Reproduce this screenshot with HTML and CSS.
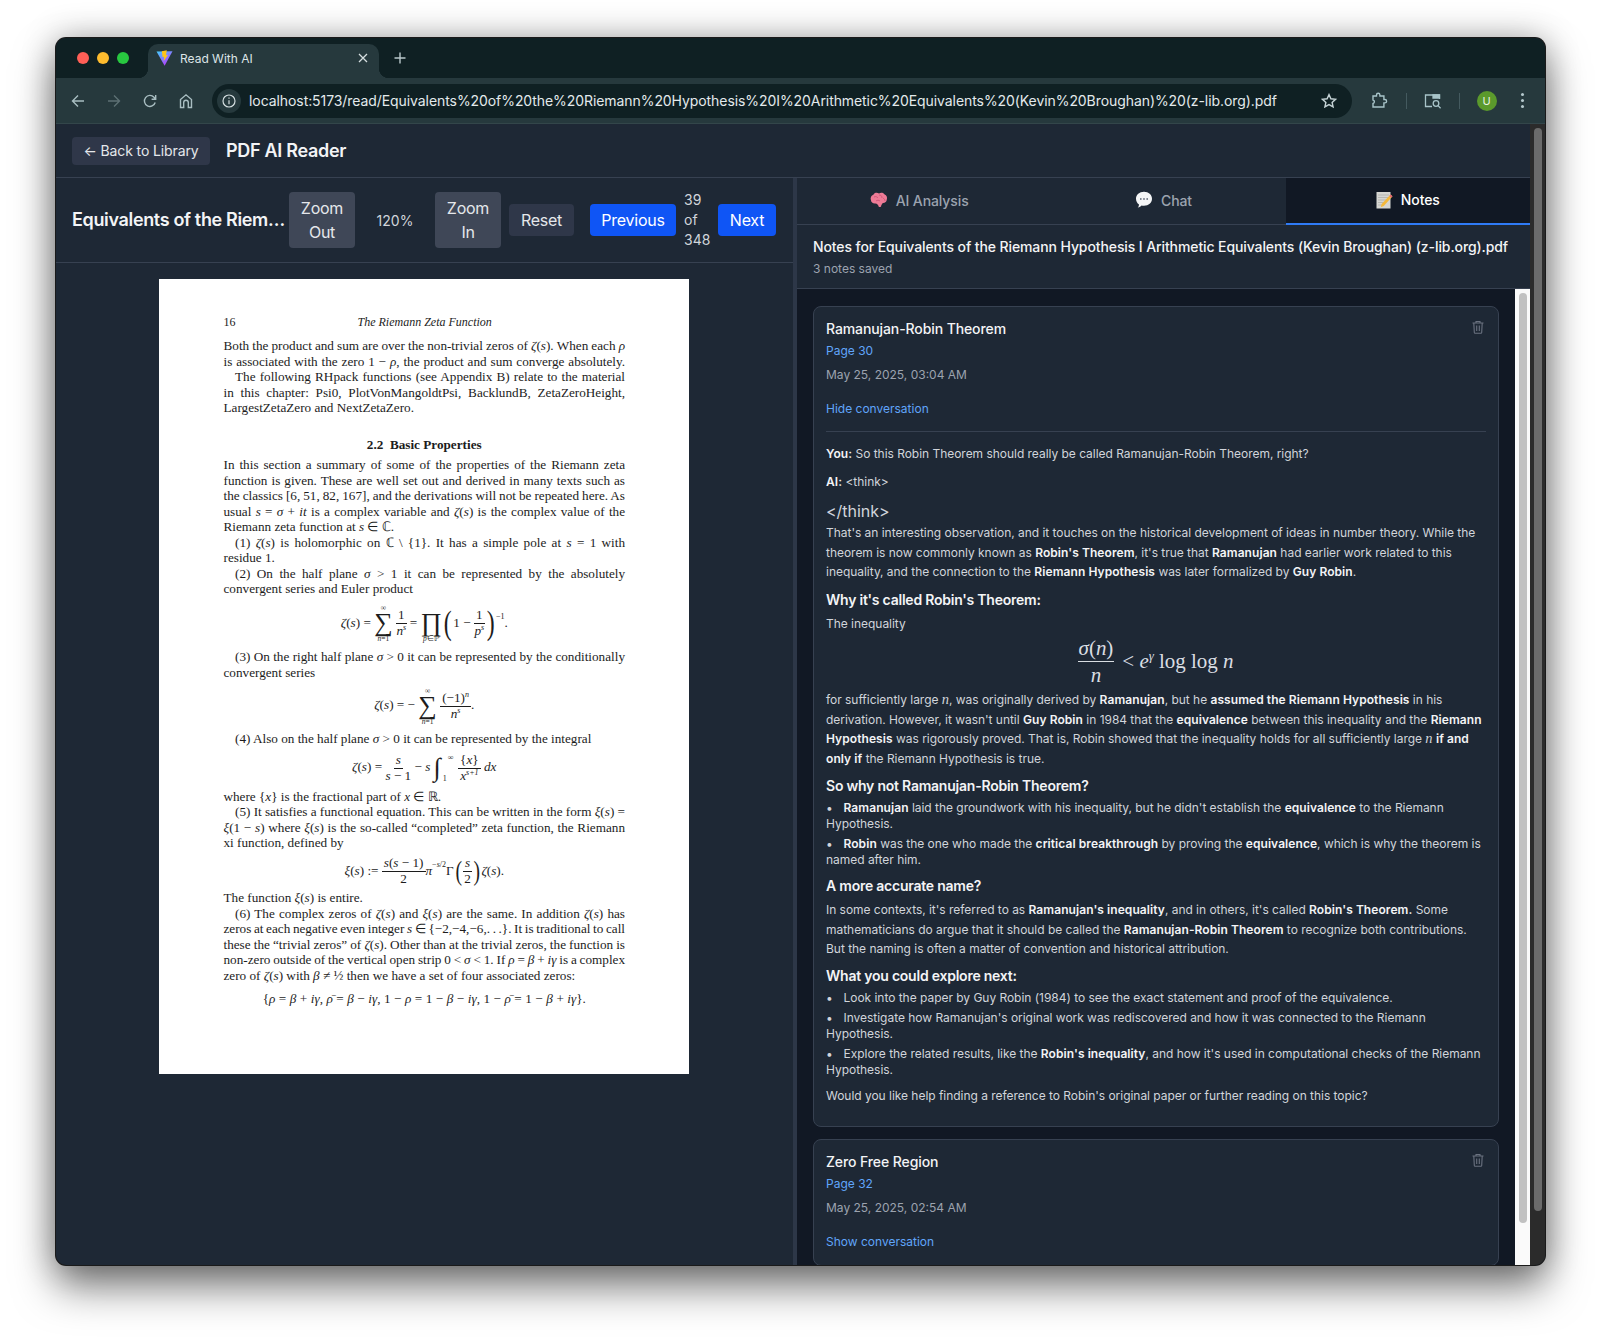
FILE: index.html
```html
<!DOCTYPE html>
<html lang="en">
<head>
  <meta charset="UTF-8">
  <title>Read With AI</title>
  <link rel="stylesheet" href="styles.css">
</head>
<body>

<div class="window">
  <div class="tabstrip">
    <div class="lights">
      <span class="light red"></span>
      <span class="light yellow"></span>
      <span class="light green"></span>
    </div>
    <div class="tab">
      <svg class="favicon" width="17" height="16" viewBox="0 0 17 16">
        <defs>
          <linearGradient id="vite" x1="0" y1="0" x2="0.7" y2="1">
            <stop offset="0" stop-color="#41d1ff"/>
            <stop offset="1" stop-color="#bd34fe"/>
          </linearGradient>
        </defs>
        <polygon points="0.5,1.5 16.5,1.2 8.6,15.8" fill="url(#vite)"/>
        <polygon points="10.8,0.2 5.8,1.2 6.6,7.2 8.2,6.8 7.6,11 12,5 10,5.3" fill="#ffc517"/>
      </svg>
      <span class="tab-title">Read With AI</span>
      <svg class="tab-close" width="10" height="10" viewBox="0 0 10 10"><path d="M1 1l8 8M9 1l-8 8" stroke="#d5dee0" stroke-width="1.3"/></svg>
    </div>
    <svg class="new-tab" width="12" height="12" viewBox="0 0 12 12"><path d="M6 0.5v11M0.5 6h11" stroke="#b9c8cb" stroke-width="1.4"/></svg>
  </div>

  <div class="toolbar">
    <span class="tool"><svg width="16" height="16" viewBox="0 0 16 16" fill="none" stroke="#a8bdc1" stroke-width="1.4"><path d="M14 8H2.5M8 2.5L2.5 8 8 13.5"/></svg></span>
    <span class="tool"><svg width="16" height="16" viewBox="0 0 16 16" fill="none" stroke="#5d7074" stroke-width="1.4"><path d="M2 8h11.5M8 2.5L13.5 8 8 13.5"/></svg></span>
    <span class="tool"><svg width="16" height="16" viewBox="0 0 16 16" fill="none" stroke="#a8bdc1" stroke-width="1.4"><path d="M13.2 9.5A5.5 5.5 0 1 1 12 4.2L13.5 6M13.7 2v4.2H9.6"/></svg></span>
    <span class="tool"><svg width="16" height="16" viewBox="0 0 16 16" fill="none" stroke="#a8bdc1" stroke-width="1.4"><path d="M2.5 14.5V6.5L8 1.8l5.5 4.7v8h-3.2V9.5a2.3 2.3 0 0 0-4.6 0v5z"/></svg></span>

    <div class="address">
      <span class="site-info"><svg width="14" height="14" viewBox="0 0 14 14" fill="none" stroke="#d5dee0" stroke-width="1.2"><circle cx="7" cy="7" r="6"/><path d="M7 6.2v4M7 3.6v1.2"/></svg></span>
      <span class="url">localhost:5173/read/Equivalents%20of%20the%20Riemann%20Hypothesis%20I%20Arithmetic%20Equivalents%20(Kevin%20Broughan)%20(z-lib.org).pdf</span>
      <svg class="star" width="16" height="16" viewBox="0 0 16 16" fill="none" stroke="#c4d2d5" stroke-width="1.4"><path d="M8 1.6l1.9 4.2 4.6.5-3.4 3.1 1 4.5L8 11.6l-4.1 2.3 1-4.5L1.500 6.300l4.600-.5z"/></svg>
    </div>

    <span class="tool tool-ext"><svg width="17" height="17" viewBox="0 0 17 17" fill="none" stroke="#a8c4c9" stroke-width="1.4"><path d="M2 4h3.500V3a1.700 1.700 0 0 1 3.400 0v1h4v3.500h1a1.700 1.700 0 0 1 0 3.400h-1V15H2v-3.500a1.800 1.800 0 0 0 0-3.500z"/></svg></span>
    <span class="sep"></span>
    <span class="tool"><svg width="18" height="16" viewBox="0 0 18 16" fill="none" stroke="#a8c4c9" stroke-width="1.3"><path d="M8 13.500H1.500V2h14v4"/><path d="M9 2h6.500v3H9z" fill="#a8c4c9"/><circle cx="12" cy="10.500" r="2.800"/><path d="M14 12.600l2.600 2.600"/></svg></span>
    <span class="sep"></span>
    <span class="tool"><span class="avatar">U</span></span>
    <span class="tool"><span class="kebab"><i></i><i></i><i></i></span></span>
  </div>

  <div class="viewport">
    <div class="app">
      <header class="app-header">
        <button class="back-btn">← Back to Library</button>
        <h1>PDF AI Reader</h1>
      </header>

      <div class="panels">
        <section class="reader">
          <div class="reader-bar">
            <div class="doc-title">Equivalents of the Riemann Hypothesis I Arithmetic Equivalents</div>
            <button class="btn btn-zoom">Zoom Out</button>
            <span class="zoom-level">120%</span>
            <button class="btn btn-zoom">Zoom In</button>
            <button class="btn btn-reset">Reset</button>
            <button class="btn btn-blue btn-prev">Previous</button>
            <span class="page-count">39 of 348</span>
            <button class="btn btn-blue btn-next">Next</button>
          </div>

          <div class="pdf-area">
            <div class="pdf-page">
              <div class="running"><span>16</span><i>The Riemann Zeta Function</i></div>
              <div class="ln">Both the product and sum are over the non-trivial zeros of <i>ζ</i>(<i>s</i>). When each <i>ρ</i></div>
              <div class="ln">is associated with the zero 1 − <i>ρ</i>, the product and sum converge absolutely.</div>
              <div class="ln ind">The following RHpack functions (see Appendix B) relate to the material</div>
              <div class="ln">in this chapter: Psi0, PlotVonMangoldtPsi, BacklundB, ZetaZeroHeight,</div>
              <div class="ln end">LargestZetaZero and NextZetaZero.</div>

              <h2 class="pdf-heading">2.2&nbsp;&nbsp;Basic Properties</h2>

              <div class="ln">In this section a summary of some of the properties of the Riemann zeta</div>
              <div class="ln">function is given. These are well set out and derived in many texts such as</div>
              <div class="ln">the classics [6, 51, 82, 167], and the derivations will not be repeated here. As</div>
              <div class="ln">usual <i>s</i> = <i>σ</i> + <i>it</i> is a complex variable and <i>ζ</i>(<i>s</i>) is the complex value of the</div>
              <div class="ln end">Riemann zeta function at <i>s</i> ∈ ℂ.</div>
              <div class="ln ind">(1) <i>ζ</i>(<i>s</i>) is holomorphic on ℂ \ {1}. It has a simple pole at <i>s</i> = 1 with</div>
              <div class="ln end">residue 1.</div>
              <div class="ln ind">(2) On the half plane <i>σ</i> &gt; 1 it can be represented by the absolutely</div>
              <div class="ln end">convergent series and Euler product</div>

              <div class="eq eq-euler">
                <i>ζ</i>(<i>s</i>) =
                <span class="bigop"><small>∞</small><b>∑</b><small><i>n</i>=1</small></span>
                <span class="frac"><span>1</span><span><i>n<sup>s</sup></i></span></span>
                =
                <span class="bigop"><small>&nbsp;</small><b>∏</b><small><i>p</i>∈ℙ</small></span><span class="paren">(</span>1 −
                <span class="frac"><span>1</span><span><i>p<sup>s</sup></i></span></span><span class="paren">)</span><sup class="pow">−1</sup>.
              </div>

              <div class="ln ind">(3) On the right half plane <i>σ</i> &gt; 0 it can be represented by the conditionally</div>
              <div class="ln end">convergent series</div>

              <div class="eq eq-series">
                <i>ζ</i>(<i>s</i>) = −
                <span class="bigop"><small>∞</small><b>∑</b><small><i>n</i>=1</small></span>
                <span class="frac"><span>(−1)<sup><i>n</i></sup></span><span><i>n<sup>s</sup></i></span></span>.
              </div>

              <div class="ln ind end">(4) Also on the half plane <i>σ</i> &gt; 0 it can be represented by the integral</div>

              <div class="eq eq-integral">
                <i>ζ</i>(<i>s</i>) =
                <span class="frac"><span><i>s</i></span><span><i>s</i> − 1</span></span>
                − <i>s</i>
                <span class="integral">∫<small class="upper">∞</small><small class="lower">1</small></span>
                <span class="frac"><span>{<i>x</i>}</span><span><i>x<sup>s+1</sup></i></span></span>
                <i>dx</i>
              </div>

              <div class="ln end">where {<i>x</i>} is the fractional part of <i>x</i> ∈ ℝ.</div>
              <div class="ln ind">(5) It satisfies a functional equation. This can be written in the form <i>ξ</i>(<i>s</i>) =</div>
              <div class="ln"><i>ξ</i>(1 − <i>s</i>) where <i>ξ</i>(<i>s</i>) is the so-called “completed” zeta function, the Riemann</div>
              <div class="ln end">xi function, defined by</div>

              <div class="eq eq-xi">
                <i>ξ</i>(<i>s</i>) :=
                <span class="frac"><span><i>s</i>(<i>s</i> − 1)</span><span>2</span></span><i>π</i><sup class="pow">−<i>s</i>/2</sup>Γ<span class="paren paren-sm">(</span><span class="frac"><span><i>s</i></span><span>2</span></span><span class="paren paren-sm">)</span><i>ζ</i>(<i>s</i>).
              </div>

              <div class="ln end">The function <i>ξ</i>(<i>s</i>) is entire.</div>
              <div class="ln ind">(6) The complex zeros of <i>ζ</i>(<i>s</i>) and <i>ξ</i>(<i>s</i>) are the same. In addition <i>ζ</i>(<i>s</i>) has</div>
              <div class="ln">zeros at each negative even integer <i>s</i> ∈ {−2,−4,−6,. . .}. It is traditional to call</div>
              <div class="ln">these the “trivial zeros” of <i>ζ</i>(<i>s</i>). Other than at the trivial zeros, the function is</div>
              <div class="ln">non-zero outside of the vertical open strip 0 &lt; <i>σ</i> &lt; 1. If <i>ρ</i> = <i>β</i> + <i>iγ</i> is a complex</div>
              <div class="ln end">zero of <i>ζ</i>(<i>s</i>) with <i>β</i> ≠ ½ then we have a set of four associated zeros:</div>

              <div class="eq eq-last">{<i>ρ</i> = <i>β</i> + <i>iγ</i>, <i>ρ̄</i> = <i>β</i> − <i>iγ</i>, 1 − <i>ρ</i> = 1 − <i>β</i> − <i>iγ</i>, 1 − <i>ρ̄</i> = 1 − <i>β</i> + <i>iγ</i>}.</div>
            </div>
          </div>
        </section>

        <div class="divider"></div>

        <section class="side">
          <nav class="tabs">
            <div class="side-tab">
              <svg width="18" height="16" viewBox="0 0 18 16"><path d="M9 1.500C11 .3 13.600 .8 14.600 2.600 16.600 3.200 17.600 5.600 16.800 7.600 16.700 9.800 14.800 11.200 12.800 11 12 12 11.400 12.600 11 14.400 10.400 15.200 9.200 15.200 8.600 14.400 8.200 12.800 7.200 11.800 5.400 11.500 3 11.800 1 10.200.9 8 .1 5.800 1.200 3.400 3.400 2.700 4.400.7 7 .3 9 1.500z" fill="#ee7b96"/><path d="M4 5c2-1 3 0 4 1M9 3c2 0 3 1 3 3M6 9c1-1 3-1 4 0M13 6c1 1 2 1 2 3" stroke="#c94f72" fill="none" stroke-width=".8"/></svg>
              AI Analysis
            </div>
            <div class="side-tab">
              <svg width="18" height="18" viewBox="0 0 18 18"><path d="M9 .8c4.600 0 8 3 8 7s-3.400 7-8 7c-.9 0-1.700-.1-2.500-.3-.8 1-2 1.800-3.700 2.100 .8-.9 1.200-1.900 1.200-3.100C2.200 12.300 1 10.200 1 7.800c0-4 3.400-7 8-7z" fill="#f4f5f6"/><circle cx="5.800" cy="8" r=".9" fill="#6b7280"/><circle cx="9" cy="8" r=".9" fill="#6b7280"/><circle cx="12.200" cy="8" r=".9" fill="#6b7280"/></svg>
              Chat
            </div>
            <div class="side-tab active">
              <svg width="17" height="18" viewBox="0 0 17 18"><rect x=".5" y="1" width="14" height="16.500" fill="#d6d6d2"/><path d="M2 4h11M2 6.500h11M2 9h8M2 11.500h6M2 14h4" stroke="#a9a9a6" stroke-width=".7"/><path d="M14.500 3.500l2 1.800L7.800 15l-3 1.200.8-3.200z" fill="#f5b93a"/><path d="M14.500 3.500l2 1.800-1.200 1.400-2-1.800z" fill="#e2667a"/></svg>
              Notes
            </div>
          </nav>

          <div class="notes-head">
            <h3>Notes for Equivalents of the Riemann Hypothesis I Arithmetic Equivalents (Kevin Broughan) (z-lib.org).pdf</h3>
            <p>3 notes saved</p>
          </div>

          <div class="notes-body">
            <div class="notes-list">
              <article class="note">
                <div class="note-top">
                  <h4>Ramanujan-Robin Theorem</h4>
                  <svg class="trash" width="14" height="14" viewBox="0 0 14 14" fill="none" stroke="#6b7280" stroke-width="1.100"><path d="M1.500 3h11M5 3V1.500h4V3M2.800 3l.5 9.500c0 .5.300.8.800.8h5.800c.5 0 .8-.3.8-.8l.5-9.500M5.700 5.500v5.500M8.300 5.500v5.500"/></svg>
                </div>
                <a class="page-link">Page 30</a>
                <div class="note-date">May 25, 2025, 03:04 AM</div>
                <a class="toggle">Hide conversation</a>

                <div class="convo">
                  <p class="turn"><strong>You:</strong> So this Robin Theorem should really be called Ramanujan-Robin Theorem, right?</p>
                  <p class="turn"><strong>AI:</strong> &lt;think&gt;</p>
                  <p class="think">&lt;/think&gt;</p>
                  <p class="para">That's an interesting observation, and it touches on the historical development of ideas in number theory. While the theorem is now commonly known as <strong>Robin's Theorem</strong>, it's true that <strong>Ramanujan</strong> had earlier work related to this inequality, and the connection to the <strong>Riemann Hypothesis</strong> was later formalized by <strong>Guy Robin</strong>.</p>
                  <h5>Why it's called Robin's Theorem:</h5>
                  <p class="para">The inequality</p>
                  <div class="math-block">
                    <span class="math-frac"><span><i>σ</i>(<i>n</i>)</span><span><i>n</i></span></span>
                    <span class="math-rest">&lt; <i>e<sup>γ</sup></i> log log <i>n</i></span>
                  </div>
                  <p class="para">for sufficiently large <i class="var">n</i>, was originally derived by <strong>Ramanujan</strong>, but he <strong>assumed the Riemann Hypothesis</strong> in his derivation. However, it wasn't until <strong>Guy Robin</strong> in 1984 that the <strong>equivalence</strong> between this inequality and the <strong>Riemann Hypothesis</strong> was rigorously proved. That is, Robin showed that the inequality holds for all sufficiently large <i class="var">n</i> <strong>if and only if</strong> the Riemann Hypothesis is true.</p>
                  <h5>So why not Ramanujan-Robin Theorem?</h5>
                  <ul>
                    <li><strong>Ramanujan</strong> laid the groundwork with his inequality, but he didn't establish the <strong>equivalence</strong> to the Riemann Hypothesis.</li>
                    <li><strong>Robin</strong> was the one who made the <strong>critical breakthrough</strong> by proving the <strong>equivalence</strong>, which is why the theorem is named after him.</li>
                  </ul>
                  <h5>A more accurate name?</h5>
                  <p class="para">In some contexts, it's referred to as <strong>Ramanujan's inequality</strong>, and in others, it's called <strong>Robin's Theorem.</strong> Some mathematicians do argue that it should be called the <strong>Ramanujan-Robin Theorem</strong> to recognize both contributions. But the naming is often a matter of convention and historical attribution.</p>
                  <h5>What you could explore next:</h5>
                  <ul>
                    <li>Look into the paper by Guy Robin (1984) to see the exact statement and proof of the equivalence.</li>
                    <li>Investigate how Ramanujan's original work was rediscovered and how it was connected to the Riemann Hypothesis.</li>
                    <li>Explore the related results, like the <strong>Robin's inequality</strong>, and how it's used in computational checks of the Riemann Hypothesis.</li>
                  </ul>
                  <p class="closing">Would you like help finding a reference to Robin's original paper or further reading on this topic?</p>
                </div>
              </article>

              <article class="note">
                <div class="note-top">
                  <h4>Zero Free Region</h4>
                  <svg class="trash" width="14" height="14" viewBox="0 0 14 14" fill="none" stroke="#6b7280" stroke-width="1.100"><path d="M1.500 3h11M5 3V1.500h4V3M2.800 3l.5 9.500c0 .5.300.8.800.8h5.800c.5 0 .8-.3.8-.8l.5-9.500M5.700 5.500v5.500M8.300 5.500v5.500"/></svg>
                </div>
                <a class="page-link">Page 32</a>
                <div class="note-date">May 25, 2025, 02:54 AM</div>
                <a class="toggle">Show conversation</a>
              </article>
            </div>
            <div class="inner-scroll"><div class="inner-thumb"></div></div>
          </div>
        </section>
      </div>
    </div>
    <div class="outer-scroll"><div class="outer-thumb"></div></div>
  </div>
</div>

</body>
</html>
```

FILE: styles.css
```css
* {
  box-sizing: border-box;
}

html, body {
  margin: 0;
  height: 100%;
}

body {
  width: 1601px;
  height: 1339px;
  overflow: hidden;
  background-color: #fff;
  font-family: Inter, "Liberation Sans", sans-serif;
  color: #d1d5db;
}

h1, h2, h3, h4, h5, p, ul {
  margin: 0;
  padding: 0;
}

button {
  font-family: inherit;
  border: none;
}

/* browser window */
.window {
  display: flex;
  flex-direction: column;
  width: 1489px;
  height: 1227px;
  margin: 38px 0 0 56px;
  border-radius: 10px;
  overflow: hidden;
  background-color: #1e2835;
  box-shadow: 0 0 0 1px #1a1a1a, 0 22px 42px rgba(0, 0, 0, 0.5), 0 0 34px rgba(0, 0, 0, 0.3);
}

.tabstrip {
  display: flex;
  align-items: flex-end;
  height: 40px;
  flex: none;
  background-color: #0f2023;
}

.lights {
  display: flex;
  gap: 8px;
  align-self: flex-start;
  margin: 14px 0 0 21px;
}

.light {
  width: 12px;
  height: 12px;
  border-radius: 50%;
}

.red { background-color: #ff5f57; }
.yellow { background-color: #febc2e; }
.green { background-color: #28c840; }

.tab {
  position: relative;
  display: flex;
  align-items: center;
  width: 231px;
  height: 34px;
  margin-left: 19px;
  padding: 0 11px 6px 8px;
  border-radius: 10px 10px 0 0;
  background-color: #26393d;
}

.tab::before, .tab::after {
  content: "";
  position: absolute;
  bottom: 0;
  width: 10px;
  height: 10px;
}

.tab::before {
  left: -10px;
  background: radial-gradient(circle at 0 0, #0f2023 10px, #26393d 10.5px);
}

.tab::after {
  right: -10px;
  background: radial-gradient(circle at 100% 0, #0f2023 10px, #26393d 10.5px);
}

.favicon {
  flex: none;
}

.tab-title {
  flex: 1;
  margin-left: 7px;
  font-size: 12px;
  color: #dde5e7;
}

.new-tab {
  margin: 0 0 14px 15px;
}

.toolbar {
  display: flex;
  align-items: center;
  flex: none;
  height: 46px;
  padding-left: 4px;
  background-color: #26393d;
  border-bottom: 1px solid #33464a;
}

.tool {
  display: flex;
  align-items: center;
  justify-content: center;
  flex: none;
  width: 36px;
  height: 32px;
}

.tool-ext svg {
  margin-right: 2px;
}

.address {
  display: flex;
  align-items: center;
  flex: none;
  width: 1140px;
  height: 34px;
  margin: 0 10px 0 8px;
  padding: 0 15px 0 5px;
  border-radius: 17px;
  background-color: #0f2023;
}

.site-info {
  display: flex;
  align-items: center;
  justify-content: center;
  flex: none;
  width: 24px;
  height: 24px;
  border-radius: 50%;
  background-color: #26393d;
}

.url {
  flex: 1;
  margin-left: 8px;
  font-size: 14px;
  letter-spacing: -0.075px;
  color: #e3eaec;
  white-space: nowrap;
  overflow: hidden;
}

.sep {
  flex: none;
  width: 1px;
  height: 16px;
  margin: 0 8px;
  background-color: #445a5f;
}

.avatar {
  display: flex;
  align-items: center;
  justify-content: center;
  width: 20px;
  height: 20px;
  margin-left: 1px;
  border-radius: 50%;
  background-color: #5b9a2c;
  font-size: 11px;
  color: #eaf3e2;
}

.kebab {
  display: flex;
  flex-direction: column;
  gap: 3px;
}

.kebab i {
  width: 3px;
  height: 3px;
  border-radius: 50%;
  background-color: #b5c9cd;
}

/* page */
.viewport {
  display: flex;
  flex: 1;
  min-height: 0;
}

.app {
  display: flex;
  flex-direction: column;
  flex: 1;
  min-width: 0;
}

.outer-scroll {
  flex: none;
  width: 15px;
  padding: 4px 3px 0 4px;
  background-color: #2b2b2b;
}

.outer-thumb {
  height: 1083px;
  border-radius: 4px;
  background-color: #6b6b6b;
}

.app-header {
  display: flex;
  align-items: center;
  gap: 16px;
  flex: none;
  height: 54px;
  padding: 0 16px;
  border-bottom: 1px solid #374151;
}

.back-btn {
  width: 138px;
  height: 28px;
  border-radius: 4px;
  background-color: #2f3749;
  font-size: 14px;
  letter-spacing: -0.12px;
  color: #e5e7eb;
}

.app-header h1 {
  font-size: 18px;
  font-weight: 600;
  letter-spacing: -0.3px;
  color: #f3f4f6;
}

.panels {
  display: flex;
  flex: 1;
  min-height: 0;
}

.reader {
  display: flex;
  flex-direction: column;
  flex: none;
  width: 737px;
}

.divider {
  flex: none;
  width: 4px;
  background-color: #2d3748;
}

.reader-bar {
  display: flex;
  align-items: center;
  flex: none;
  height: 85px;
  padding-left: 16px;
  border-bottom: 1px solid #374151;
}

.doc-title {
  flex: none;
  width: 217px;
  padding-bottom: 2px;
  font-size: 18px;
  font-weight: 600;
  letter-spacing: -0.35px;
  color: #f3f4f6;
  white-space: nowrap;
  overflow: hidden;
  text-overflow: ellipsis;
}

.btn {
  flex: none;
  padding: 4px 0;
  border-radius: 4px;
  font-size: 16px;
  line-height: 24px;
  letter-spacing: -0.25px;
  color: #e5e7eb;
}

.btn-zoom {
  width: 66px;
  height: 56px;
  padding: 4px 8px;
  background-color: #3f4757;
}

.zoom-level {
  flex: none;
  width: 80px;
  text-align: center;
  font-size: 14px;
  color: #d1d5db;
}

.btn-reset {
  width: 65px;
  margin-left: 8px;
  background-color: #2f3749;
}

.btn-blue {
  background-color: #0f55f5;
  color: #fff;
}

.btn-prev {
  width: 86px;
  margin-left: 16px;
}

.btn-next {
  width: 58px;
}

.page-count {
  flex: none;
  width: 26px;
  margin: 0 8px;
  font-size: 14px;
  line-height: 20px;
  color: #d1d5db;
}

/* pdf */
.pdf-area {
  flex: 1;
  padding: 16px 0 0 103px;
}

.pdf-page {
  width: 530px;
  height: 795px;
  padding: 36px 64px 0 64.500px;
  background-color: #fff;
  font-family: "Liberation Serif", serif;
  font-size: 13.2px;
  line-height: 15.500px;
  color: #1c1c1c;
}

.running {
  display: flex;
  margin-bottom: 7.500px;
  font-size: 12px;
}

.running i {
  margin-left: 122px;
}

.ln {
  text-align: justify;
  text-align-last: justify;
  white-space: nowrap;
  word-spacing: -1px;
}

.ln.end {
  text-align-last: left;
  word-spacing: 0;
}

.ind {
  padding-left: 11.500px;
}

.pdf-heading {
  margin: 21.500px 0 4.500px;
  font-size: 13.2px;
  line-height: 15.500px;
  font-weight: bold;
  text-align: center;
}

.eq {
  text-align: center;
  white-space: nowrap;
}

.eq-euler { height: 52.500px; line-height: 52.500px; }
.eq-series { height: 50.500px; line-height: 50.500px; }
.eq-integral { height: 42.500px; line-height: 42.500px; }
.eq-xi { height: 39.500px; line-height: 39.500px; }
.eq-last { height: 15.500px; margin-top: 8px; word-spacing: 0.2px; }

.frac {
  display: inline-flex;
  flex-direction: column;
  align-items: center;
  vertical-align: middle;
  line-height: 14px;
}

.frac > span:first-child {
  padding: 0 2px 1px;
  border-bottom: 1px solid #1c1c1c;
}

.frac sup, .pow {
  font-size: 8px;
  line-height: 0;
}

.pow {
  vertical-align: 8px;
}

.bigop {
  display: inline-flex;
  flex-direction: column;
  align-items: center;
  vertical-align: middle;
  line-height: 9px;
}

.bigop small {
  font-size: 7.500px;
}

.bigop b {
  display: block;
  font-size: 26px;
  font-weight: normal;
  line-height: 22px;
}

.paren {
  display: inline-block;
  vertical-align: middle;
  font-size: 34px;
  font-weight: 200;
  line-height: 30px;
  transform: scaleX(0.7);
}

.paren-sm {
  font-size: 28px;
}

.integral {
  position: relative;
  display: inline-block;
  vertical-align: middle;
  padding-right: 14px;
  font-size: 26px;
  font-style: italic;
  line-height: 30px;
}

.integral small {
  position: absolute;
  left: 14px;
  font-size: 8px;
  font-style: normal;
  line-height: 8px;
}

.integral .upper { top: 1px; }
.integral .lower { bottom: 0; left: 9px; }

/* right side */
.side {
  display: flex;
  flex-direction: column;
  flex: 1;
  min-width: 0;
}

.tabs {
  display: flex;
  flex: none;
  height: 47px;
  border-bottom: 1px solid #374151;
}

.side-tab {
  display: flex;
  align-items: center;
  justify-content: center;
  gap: 8px;
  flex: 1;
  padding-bottom: 2px;
  font-size: 14px;
  font-weight: 500;
  letter-spacing: -0.1px;
  color: #9ca3af;
}

.side-tab.active {
  height: 47px;
  background-color: #111824;
  border-bottom: 2px solid #2f7bf6;
  color: #fff;
}

.notes-head {
  flex: none;
  height: 64px;
  padding: 12px 16px 0;
  border-bottom: 1px solid #374151;
}

.notes-head h3 {
  font-size: 14px;
  line-height: 20px;
  font-weight: 500;
  letter-spacing: -0.1px;
  color: #f3f4f6;
  white-space: nowrap;
}

.notes-head p {
  margin-top: 4px;
  font-size: 12px;
  line-height: 16px;
  color: #9ca3af;
}

.notes-body {
  display: flex;
  flex: 1;
  min-height: 0;
}

.notes-list {
  flex: 1;
  min-width: 0;
  padding: 17px 16px 0;
  overflow: hidden;
  background-color: #111824;
}

.inner-scroll {
  flex: none;
  width: 15px;
  padding: 4px 3px 0 4px;
  background-color: #fafafa;
}

.inner-thumb {
  height: 930px;
  border-radius: 4px;
  background-color: #c1c1c1;
}

.note {
  margin-bottom: 12px;
  padding: 12px 12px 15px;
  border: 1px solid #374151;
  border-radius: 8px;
  background-color: #1e2835;
}

.note-top {
  display: flex;
  justify-content: space-between;
  align-items: flex-start;
}

.trash {
  margin: 1px 1px 0 0;
}

.note h4 {
  font-size: 14px;
  line-height: 20px;
  font-weight: 500;
  letter-spacing: -0.1px;
  color: #f3f4f6;
}

.page-link, .toggle {
  display: block;
  font-size: 12px;
  line-height: 16px;
  color: #60a5fa;
}

.page-link {
  margin-top: 4px;
}

.note-date {
  margin-top: 8px;
  font-size: 12px;
  line-height: 16px;
  color: #9ca3af;
}

.toggle {
  margin-top: 18px;
}

.convo {
  margin-top: 14px;
  padding: 14px 0 7px;
  border-top: 1px solid #374151;
  font-size: 12px;
  letter-spacing: -0.03px;
}

.convo strong {
  font-weight: 600;
  letter-spacing: 0.07px;
  color: #f3f4f6;
}

.turn {
  margin-bottom: 12px;
  line-height: 16px;
}

.think {
  margin-top: -3px;
  font-size: 16px;
  line-height: 24px;
}

.para {
  line-height: 19.500px;
}

.convo h5 {
  margin: 8px 0 4px;
  font-size: 14px;
  line-height: 20px;
  font-weight: 600;
  letter-spacing: -0.23px;
  color: #f3f4f6;
}

.convo h5:last-of-type {
  margin-top: 7px;
}

.var {
  font-family: "Liberation Serif", serif;
  font-size: 14.500px;
}

.math-block {
  display: flex;
  align-items: center;
  justify-content: center;
  gap: 8px;
  height: 57px;
  padding-right: 1px;
  font-family: "Liberation Serif", serif;
  font-size: 21px;
  color: #d9dde2;
}

.math-frac {
  display: inline-flex;
  flex-direction: column;
  align-items: center;
  line-height: 26px;
}

.math-frac > span:first-child {
  padding: 0 1px;
  border-bottom: 1px solid #d9dde2;
}

.math-rest sup {
  font-size: 13px;
  line-height: 0;
}

.convo ul {
  list-style: none;
}

.convo li {
  margin-bottom: 4px;
  line-height: 16px;
}

.convo li::before {
  content: "•";
  display: inline-block;
  width: 17.500px;
}

.closing {
  margin-top: 10px;
  line-height: 16px;
}
```
